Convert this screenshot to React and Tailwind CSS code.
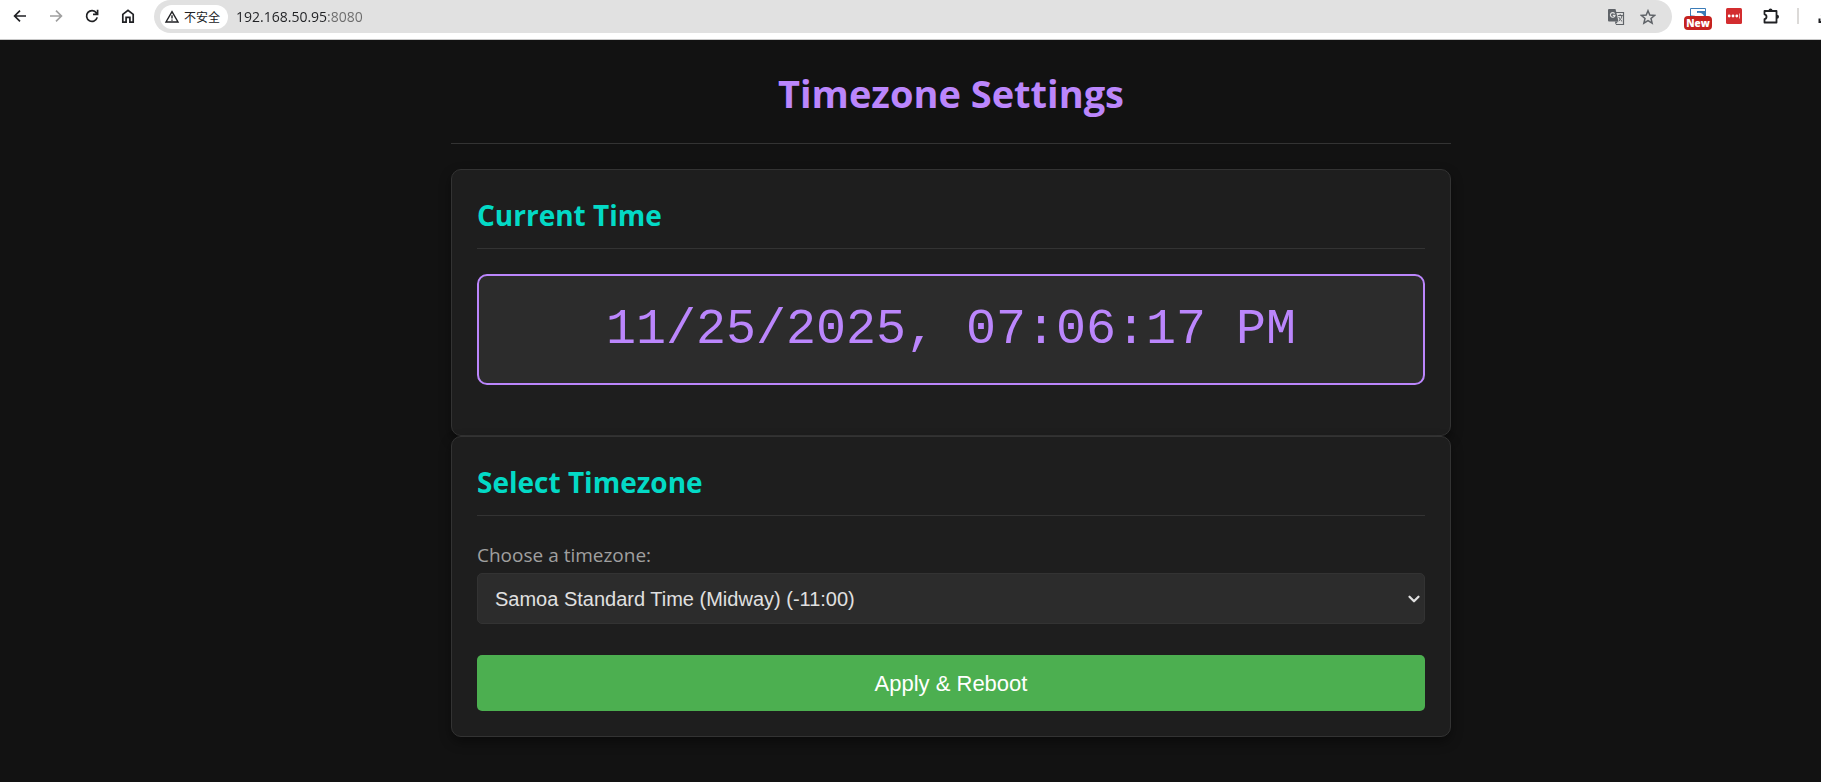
import React, { useState } from 'react';
import { ChevronDown } from 'lucide-react';

const TIMEZONES = [
  { id: 'Pacific/Midway', label: 'Samoa Standard Time (Midway) (-11:00)' },
  { id: 'Pacific/Honolulu', label: 'Hawaii Standard Time (Honolulu) (-10:00)' },
  { id: 'Asia/Shanghai', label: 'China Standard Time (Shanghai) (+08:00)' },
];

function ToolButton({ label, className = '', children }) {
  return (
    <button type="button" aria-label={label} className={`flex h-5 w-5 shrink-0 items-center justify-center ${className}`}>
      {children}
    </button>
  );
}

function Icon({ size = 16, width = 2, children }) {
  return (
    <svg width={size} height={size} viewBox="0 0 16 16" fill="none" stroke="currentColor" strokeWidth={width} aria-hidden>
      {children}
    </svg>
  );
}

function BrowserBar() {
  return (
    <header className="flex h-10 items-start overflow-hidden border-b border-[#c8c8c8] bg-white text-[#202124]">
      <div className="flex h-8 shrink-0 items-center gap-4 pl-[10px]">
        <ToolButton label="Back">
          <Icon width={1.7}><path d="M14 8H2.8M8 2.6 2.6 8 8 13.4" /></Icon>
        </ToolButton>
        <ToolButton label="Forward" className="text-[#a0a0a0]">
          <Icon width={1.7}><path d="M2 8h11.2M8 2.6 13.4 8 8 13.4" /></Icon>
        </ToolButton>
        <ToolButton label="Reload">
          <Icon width={1.7}><path d="M13.2 9.4A5.4 5.4 0 1 1 12.4 4.9L13.4 6.2M13.6 1.8v4.6H9" /></Icon>
        </ToolButton>
        <ToolButton label="Home">
          <Icon width={1.7}><path d="M2.8 6.4 8 2.4l5.2 4v7.7H9.9V9.4H6.1v4.7H2.8z" /></Icon>
        </ToolButton>
      </div>

      <div className="ml-4 flex h-[33px] min-w-0 flex-1 items-center rounded-full bg-[#e1e1e1] pl-1.5 pr-3.5">
        <div className="flex h-6 shrink-0 items-center gap-1 rounded-full bg-white px-1">
          <Icon width={1.4}>
            <path d="M8 2.6 14 13H2z" />
            <path d="M8 6.2v3.4M8 10.4v1.3" />
          </Icon>
          <span className="pr-1 font-['Noto_Sans_CJK_SC',sans-serif] text-[12px] leading-4">不安全</span>
        </div>
        {/* host is dark, port is dimmed */}
        <input
          type="text"
          aria-label="Address"
          defaultValue="192.168.50.95:8080"
          className="ml-2 h-5 min-w-0 flex-1 bg-[linear-gradient(90deg,#202124_91px,#6b6b6b_91px)] bg-clip-text text-[14px] leading-5 text-transparent caret-[#202124] outline-none"
        />
        <div className="flex items-center gap-3 text-[#5f6368]">
          <ToolButton label="Translate">
            <svg width="18" height="18" viewBox="0 0 18 18" aria-hidden>
              <path d="M7.500 4.500h9v12H9" fill="none" stroke="#5f6368" strokeWidth="1.200" />
              <path d="M2 1h6.500l3 12.500H2a1 1 0 0 1-1-1V2a1 1 0 0 1 1-1z" fill="#5f6368" />
              <path d="m11 13.500-2.500 3-.5-3z" fill="#5f6368" />
              <path d="M7.600 5.600A2.300 2.300 0 1 0 8 7.400H5.800" fill="none" stroke="#e1e1e1" strokeWidth="1.200" />
              <path d="M10.800 7.500h5M13.200 6.200v1.300M15 7.500c-.4 2.300-1.400 4-3 5.300M11.800 9c.7 1.900 1.700 3.200 3.300 4.300" fill="none" stroke="#5f6368" />
            </svg>
          </ToolButton>
          <ToolButton label="Bookmark">
            <Icon width={1.5}>
              <path d="m8 1.700 1.800 4.300 4.800.4-3.600 3.100 1.100 4.600L8 11.600l-4.100 2.500L5 9.500 1.400 6.400l4.800-.4z" />
            </Icon>
          </ToolButton>
        </div>
      </div>

      <div className="flex h-8 w-[149px] shrink-0 items-center pl-3">
        <button type="button" aria-label="New extension" className="relative h-6 w-7 shrink-0">
          <svg className="absolute left-1.5 top-1" width="16" height="16" viewBox="0 0 16 16" aria-hidden>
            <path d="M.5 16V.5h15V16" fill="#fff" stroke="#3b7cb8" />
            <path d="M7 3h8v5H14Q12 4 7 5z" fill="#3b7cb8" />
            <path d="M1 7q4 0 6 2H1z" fill="#8fb6dc" />
          </svg>
          <span className="absolute left-0 top-3 flex h-[14px] w-7 items-center justify-center rounded bg-[#c5221f] text-[10px] font-extrabold leading-[14px] text-white">
            New
          </span>
        </button>
        <button type="button" aria-label="Password manager" className="ml-3.5 shrink-0">
          <svg width="16" height="16" viewBox="0 0 16 16" aria-hidden>
            <rect width="16" height="16" rx="1.500" fill="#d32d2f" />
            <circle cx="3.200" cy="8" r="1.400" fill="#fff" />
            <circle cx="7" cy="8" r="1.400" fill="#fff" />
            <circle cx="10.800" cy="8" r="1.400" fill="#fff" />
            <path d="M13.500 5.500v5" stroke="#f3b5b5" />
          </svg>
        </button>
        <ToolButton label="Extensions" className="ml-[19px]">
          <svg width="18" height="18" viewBox="0 0 18 18" aria-hidden>
            <path
              d="M2.500 4h12v11.500h-12v-3.300a2.500 2.500 0 0 0 0-4.900z"
              fill="none"
              stroke="#202124"
              strokeWidth="1.800"
              strokeLinejoin="round"
            />
            <path d="M6.500 3.500a2 2 0 0 1 4 0zM15 7.700a2 2 0 0 1 0 4z" fill="#202124" />
          </svg>
        </ToolButton>
        <span className="ml-4 h-4 w-0.5 shrink-0 bg-[#dcdad8]" />
        <ToolButton label="Downloads" className="ml-4">
          <Icon><path d="M8 2v8M4.500 7 8 10.500 11.500 7M2.500 10.500V14h11v-3.500" /></Icon>
        </ToolButton>
      </div>
    </header>
  );
}

function Card({ title, children }) {
  return (
    <section className="rounded-[10px] border border-[#333333] bg-[#1e1e1e] p-[25px] shadow-[0_5px_12px_rgba(0,0,0,0.4)]">
      <h2 className="mb-[25px] border-b border-[#333333] pb-3 text-[28px] font-bold leading-[41px] text-[#03dac6]">
        {title}
      </h2>
      {children}
    </section>
  );
}

export default function App() {
  const [zone, setZone] = useState(TIMEZONES[0].id);

  return (
    <div className="flex min-h-screen flex-col bg-[#121212] font-['Open_Sans','Noto_Sans_CJK_SC',sans-serif]">
      <BrowserBar />

      <div className="pl-[81px]">
        <main className="mx-auto w-full max-w-[1000px] pt-[25px]">
          <h1 className="mb-[25px] border-b border-[#333333] pb-[22px] text-center text-[38px] font-bold leading-[56px] text-[#bb86fc]">
            Timezone Settings
          </h1>

          <Card title="Current Time">
            <div className="mb-[25px] rounded-[10px] border-2 border-[#bb86fc] bg-[#2c2c2c] p-[25px] text-center font-['Liberation_Mono',monospace] text-[50px] leading-[57px] text-[#bb86fc]">
              11/25/2025, 07:06:17 PM
            </div>
          </Card>

          <Card title="Select Timezone">
            <label htmlFor="timezone" className="mb-1 block text-[19px] leading-7 text-[#a0a0a0]">
              Choose a timezone:
            </label>
            <div className="relative mb-[31px]">
              <select
                id="timezone"
                value={zone}
                onChange={(e) => setZone(e.target.value)}
                className="block h-[51px] w-full appearance-none rounded-[5px] border border-[#333333] bg-[#2c2c2c] px-[17px] font-['Liberation_Sans',sans-serif] text-[20px] text-[#e0e0e0]"
              >
                {TIMEZONES.map((tz) => (
                  <option key={tz.id} value={tz.id}>{tz.label}</option>
                ))}
              </select>
              <ChevronDown
                className="pointer-events-none absolute right-0.5 top-[17px] h-[18px] w-[18px] text-[#e0e0e0]"
                strokeWidth={3}
                aria-hidden
              />
            </div>
            <button
              type="button"
              className="block h-14 w-full rounded-[5px] bg-[#4caf50] font-['Liberation_Sans',sans-serif] text-[22px] text-white"
            >
              Apply &amp; Reboot
            </button>
          </Card>
        </main>
      </div>
    </div>
  );
}
